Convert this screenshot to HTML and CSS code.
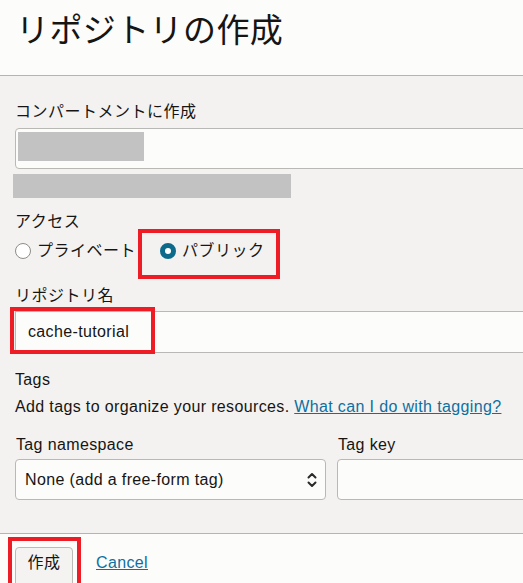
FILE: index.html
```html
<!DOCTYPE html>
<html lang="ja">
<head>
<meta charset="utf-8">
<title>リポジトリの作成</title>
<link rel="stylesheet" href="styles.css">
</head>
<body>
<div class="page">
  <header class="header">
    <h1 class="title">リポジトリの作成</h1>
  </header>
  <main class="body">
    <div class="label jp l-compartment">コンパートメントに作成</div>
    <div class="input input-compartment"><span class="redact"></span></div>
    <div class="redact-bar"></div>

    <div class="label jp l-access">アクセス</div>
    <div class="radios jp">
      <label class="option"><span class="radio"></span><span>プライベート</span></label>
      <label class="option option-public"><span class="radio radio-on"></span><span>パブリック</span><span class="mark mark-radio"></span></label>
    </div>

    <div class="label jp l-name">リポジトリ名</div>
    <div class="field-wrap">
      <div class="input input-name"><span class="value">cache-tutorial</span></div>
      <span class="mark mark-name"></span>
    </div>

    <div class="label l-tags">Tags</div>
    <div class="help">Add tags to organize your resources. <a class="link" href="#">What can I do with tagging?</a></div>

    <div class="tag-row">
      <div class="tag-col tag-ns">
        <div class="label">Tag namespace</div>
        <div class="select">
          <span>None (add a free-form tag)</span>
          <svg class="chev" width="10" height="16" viewBox="0 0 10 16"><path d="M1.5 5.5 L5 2 L8.5 5.5" fill="none" stroke="#2b2a28" stroke-width="2" stroke-linecap="round" stroke-linejoin="round"/><path d="M1.5 10.5 L5 14 L8.5 10.5" fill="none" stroke="#2b2a28" stroke-width="2" stroke-linecap="round" stroke-linejoin="round"/></svg>
        </div>
      </div>
      <div class="tag-col tag-key">
        <div class="label">Tag key</div>
        <div class="input input-key"></div>
      </div>
    </div>
  </main>
  <footer class="footer">
    <div class="btn-wrap">
      <button class="btn jp" type="button">作成</button>
      <span class="mark mark-btn"></span>
    </div>
    <a class="link cancel" href="#">Cancel</a>
  </footer>
</div>
</body>
</html>
```

FILE: styles.css
```css
html, body {
  margin: 0;
  padding: 0;
  background: #fcfcfb;
}
body {
  font-family: "Liberation Sans", "Noto Sans CJK JP", sans-serif;
  color: #161513;
  font-size: 16px;
  line-height: 20px;
  letter-spacing: 0.36px;
  overflow: hidden;
}
.jp {
  letter-spacing: 0.5px;
}
.page {
  width: 523px;
  height: 583px;
  overflow: hidden;
}
.header {
  height: 75px;
  border-bottom: 1px solid #b6b4b1;
  background: #fcfcfb;
  box-sizing: content-box;
}
.title {
  margin: 0;
  padding: 10px 0 0 16px;
  font-size: 33px;
  line-height: 42px;
  font-weight: normal;
  letter-spacing: 0.4px;
}
.body {
  background: #f3f2f1;
  height: 457px;
  padding: 26px 0 0 15px;
  box-sizing: border-box;
  overflow: hidden;
}
.label {
  line-height: 20px;
  height: 20px;
}
.input, .select {
  box-sizing: border-box;
  background: #fcfcfb;
  border: 1px solid #bab8b4;
  border-radius: 4px;
}
.input-compartment {
  margin-top: 6px;
  width: 530px;
  height: 41px;
  padding: 3px 2px;
}
.redact {
  display: block;
  width: 126px;
  height: 29px;
  background: #c2c2c2;
}
.redact-bar {
  margin: 5px 0 0 -2px;
  width: 278px;
  height: 24px;
  background: #c2c2c2;
}
.l-access {
  margin-top: 14px;
}
.radios {
  margin-top: 7px;
  display: flex;
  align-items: center;
  height: 24px;
  gap: 24px;
}
.option {
  position: relative;
  display: flex;
  align-items: center;
  gap: 6px;
}
.radio {
  width: 16px;
  height: 16px;
  box-sizing: border-box;
  border-radius: 50%;
  border: 1px solid #8e8c89;
  background: #ffffff;
}
.radio-on {
  border: 5px solid #0d6a8a;
  background: #ffffff;
}
.mark {
  position: absolute;
  border: 4px solid #ee1c25;
  box-sizing: border-box;
}
.mark-radio {
  left: -22px;
  top: -12px;
  width: 142px;
  height: 50px;
}
.l-name {
  margin-top: 23px;
}
.field-wrap {
  position: relative;
  margin-top: 5px;
}
.input-name {
  width: 530px;
  height: 42px;
  padding: 0 12px;
  display: flex;
  align-items: center;
  border-radius: 0;
}
.mark-name {
  left: -5px;
  top: -4px;
  width: 145px;
  height: 47px;
}
.l-tags {
  margin-top: 17px;
}
.help {
  margin-top: 7px;
  line-height: 20px;
}
.link {
  color: #0f6fa0;
  text-decoration: underline;
}
.tag-row {
  margin-top: 18px;
  display: flex;
  gap: 11px;
}
.tag-ns {
  width: 311px;
  flex: none;
}
.tag-key {
  width: 200px;
  flex: none;
}
.tag-col .label {
  margin-left: 1px;
}
.select {
  margin-top: 4px;
  height: 41px;
  display: flex;
  align-items: center;
  justify-content: space-between;
  padding: 0 8px 0 9px;
}
.chev {
  display: block;
}
.input-key {
  margin-top: 4px;
  height: 41px;
  width: 220px;
}
.footer {
  border-top: 1px solid #b6b4b1;
  background: #fcfcfb;
  padding: 13px 0 0 15px;
  display: flex;
  align-items: flex-start;
  gap: 23px;
}
.btn-wrap {
  position: relative;
}
.btn {
  font-family: "Liberation Sans", "Noto Sans CJK JP", sans-serif;
  font-size: 16px;
  line-height: 20px;
  color: #161513;
  width: 58px;
  height: 44px;
  background: #f4f3f1;
  border: 1px solid #bcbab6;
  border-radius: 4px;
  padding: 5px 0 0 0;
  display: flex;
  align-items: flex-start;
  justify-content: center;
}
.mark-btn {
  left: -7px;
  top: -10px;
  width: 73px;
  height: 56px;
}
.cancel {
  margin-top: 6px;
  line-height: 20px;
}
```
